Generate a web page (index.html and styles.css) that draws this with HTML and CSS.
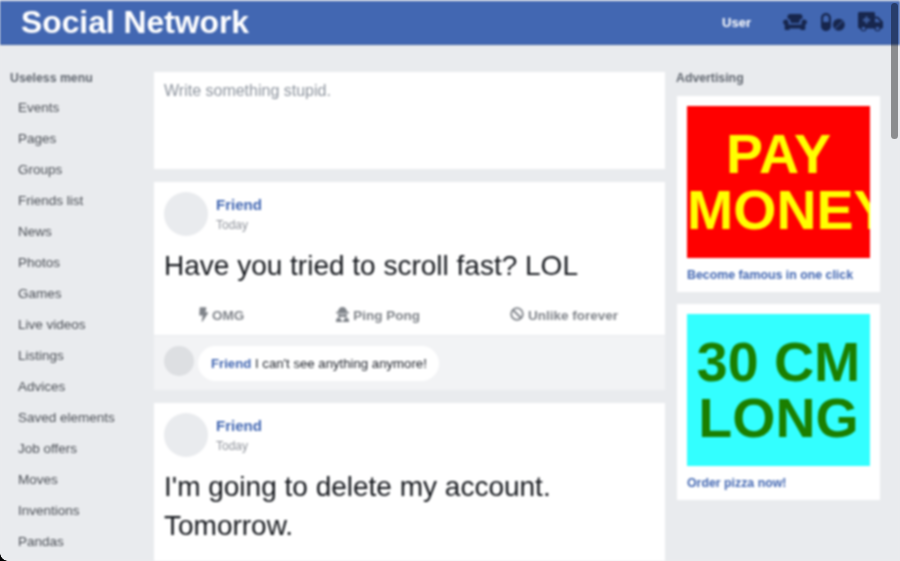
FILE: index.html
```html
<!DOCTYPE html>
<html lang="en">
<head>
    <meta charset="UTF-8">
    <meta name="viewport" content="width=device-width, initial-scale=1.0">
    <title>Social Network</title>
    <link rel="stylesheet" href="styles.css">
</head>
<body>
    <div class="page">
        <header class="topbar">
            <h1 class="logo">Social Network</h1>
            <span class="user">User</span>
            <svg class="top-icon couch" viewBox="0 0 24 16"><path d="M4.500 4.500V2.500C4.500 1.100 5.600 0 7 0h10c1.400 0 2.500 1.100 2.500 2.500v2c-1.700.200-3 1.600-3 3.300V9h-9V7.800c0-1.700-1.300-3.100-3-3.300zM21 5.500c-1.500 0-2.500 1.100-2.500 2.500v2.500h-13V8c0-1.400-1-2.500-2.500-2.500S0 6.600 0 8c0 1.200.700 2.200 1.700 2.700V15c0 .500.500 1 1 1h3c.500 0 1-.500 1-1v-.500h10.600v.500c0 .500.500 1 1 1h3c.500 0 1-.500 1-1v-4.300C23.300 10.200 24 9.200 24 8c0-1.400-1.300-2.500-3-2.500z"/></svg>
            <svg class="top-icon pills" viewBox="0 0 24 18"><path d="M5 0C2.200 0 0 2.200 0 5v8c0 2.800 2.200 5 5 5s5-2.200 5-5V5c0-2.800-2.200-5-5-5zm2.800 9H2.200V5C2.200 3.500 3.500 2.200 5 2.200S7.800 3.500 7.800 5v4z"/><circle cx="17.800" cy="11.800" r="6"/><path class="pill-line" d="M13.800 15.800l8-8"/></svg>
            <svg class="top-icon truck" viewBox="0 0 25 20"><path d="M1.500 0C.700 0 0 .700 0 1.500v13.500C0 15.800.700 16.500 1.500 16.500H2.100a3.500 3.500 0 0 0 6.800 0h7.200a3.500 3.500 0 0 0 6.800 0h.800c.700 0 1.300-.600 1.300-1.300V10.500c0-.500-.200-.900-.500-1.200L20.500 5c-.300-.300-.800-.500-1.200-.500H17V1.500C17 .700 16.300 0 15.500 0zM17 6.500h2l3 3v.800h-5zM5.500 14.700a1.800 1.800 0 1 1 0 3.600 1.800 1.800 0 0 1 0-3.600zm14 0a1.800 1.800 0 1 1 0 3.600 1.800 1.800 0 0 1 0-3.600z"/><path class="cross" d="M7.300 4.500h2.400v2.300H12v2.400H9.700v2.300H7.300V9.200H5V6.800h2.300z"/></svg>
        </header>

        <div class="columns">
            <nav class="side-menu">
                <h2 class="col-title">Useless menu</h2>
                <ul class="menu-list">
                    <li>Events</li>
                    <li>Pages</li>
                    <li>Groups</li>
                    <li>Friends list</li>
                    <li>News</li>
                    <li>Photos</li>
                    <li>Games</li>
                    <li>Live videos</li>
                    <li>Listings</li>
                    <li>Advices</li>
                    <li>Saved elements</li>
                    <li>Job offers</li>
                    <li>Moves</li>
                    <li>Inventions</li>
                    <li>Pandas</li>
                </ul>
            </nav>

            <main class="feed">
                <div class="composer">Write something stupid.</div>

                <article class="post">
                    <div class="post-head">
                        <div class="avatar"></div>
                        <div class="post-meta">
                            <a class="friend-name">Friend</a>
                            <span class="post-date">Today</span>
                        </div>
                    </div>
                    <p class="post-text">Have you tried to scroll fast? LOL</p>
                    <div class="post-actions">
                        <span class="action action-omg">
                            <svg class="action-icon bolt" viewBox="0 0 10 16"><path d="M1.500 0h6c.500 0 .800.400.700.900L7 5.500h2.500c.500 0 .800.600.500 1L4 15.700c-.300.500-1.100.200-1-.400l1.200-6.200H1c-.500 0-.800-.400-.700-.800L.8.600C.900.200 1.200 0 1.500 0z"/></svg>
                            OMG
                        </span>
                        <span class="action action-ping">
                            <svg class="action-icon secret" viewBox="0 0 15 15"><path d="M3 5C3 2 5 0 7.500 0S12 2 12 5z"/><rect x="1" y="4.800" width="13" height="1.700" rx=".8"/><path d="M3 7.300h3.800c.300 0 .500.300.700.600.200-.300.400-.600.700-.600H12v1.200c0 1-.800 1.800-1.800 1.800H9c-.600 0-1.100-.500-1.500-1-.400.500-.900 1-1.500 1H4.800C3.800 10.300 3 9.500 3 8.500z"/><path d="M1 15v-1.500c0-1.400 1-2.500 2.500-3l1.500.500 2.500 4 2.500-4 1.500-.500c1.500.500 2.500 1.600 2.500 3V15z"/></svg>
                            Ping Pong
                        </span>
                        <span class="action action-ban">
                            <svg class="action-icon ban" viewBox="0 0 14 14"><circle cx="7" cy="7" r="5.800"/><path d="M3 3l8 8"/></svg>
                            Unlike forever
                        </span>
                    </div>
                    <div class="comments">
                        <div class="avatar avatar-small"></div>
                        <div class="bubble"><a class="friend-name">Friend</a> I can't see anything anymore!</div>
                    </div>
                </article>

                <article class="post">
                    <div class="post-head">
                        <div class="avatar"></div>
                        <div class="post-meta">
                            <a class="friend-name">Friend</a>
                            <span class="post-date">Today</span>
                        </div>
                    </div>
                    <p class="post-text">I'm going to delete my account. Tomorrow.</p>
                    <div class="post-actions"></div>
                </article>
            </main>

            <aside class="ads">
                <h2 class="col-title">Advertising</h2>
                <div class="ad-card">
                    <div class="ad-banner ad-red">PAY<br>MONEY</div>
                    <a class="ad-link">Become famous in one click</a>
                </div>
                <div class="ad-card">
                    <div class="ad-banner ad-cyan">30 CM<br>LONG</div>
                    <a class="ad-link">Order pizza now!</a>
                </div>
            </aside>
        </div>
    </div>

    <div class="scroll-track"><div class="scroll-thumb"></div></div>
    <div class="window-corner"></div>
</body>
</html>
```

FILE: styles.css
```css
html, body { margin: 0; padding: 0; height: 561px; overflow: hidden; background-color: #e9ebee; }
body { font-family: "Liberation Sans", Arial, sans-serif; color: #4b4f56; }
.page { height: 561px; overflow: hidden; filter: blur(1px); background-color: #e9ebee; }

.topbar { height: 44px; box-sizing: border-box; margin-top: 1px; background-color: #4267b2; display: flex; align-items: center; padding: 0 17px 1px 21px; border-bottom: 1px solid #3d5e9f; }
.logo { margin: 0; font-size: 31.800px; line-height: 42px; font-weight: bold; color: white; flex: 1; }
.user { font-size: 13px; font-weight: bold; color: white; margin-right: 32px; }
.top-icon { fill: #17264d; display: block; flex: none; }
.couch { width: 24px; height: 16px; margin-right: 14px; }
.pills { width: 24px; height: 18px; margin-right: 13px; }
.pill-line { stroke: #4267b2; stroke-width: 1; }
.truck { width: 25px; height: 20px; }
.truck .cross { fill: #3d5e9f; }

.columns { display: flex; align-items: flex-start; }
.side-menu { width: 154px; flex: none; padding-top: 26px; box-sizing: border-box; }
.col-title { margin: 0; font-size: 12.300px; line-height: 14px; font-weight: bold; color: #616770; }
.side-menu .col-title { padding-left: 10px; }
.menu-list { list-style-type: none; margin: 0; padding: 7px 0 0 18px; }
.menu-list li { font-size: 13.500px; line-height: 31px; color: #4b4f56; }

.feed { width: 511px; flex: none; padding-top: 27px; }
.composer { height: 97px; box-sizing: border-box; background-color: white; padding: 10px; font-size: 16px; line-height: 18px; color: #8d949e; margin-bottom: 13px; }
.post { background-color: white; margin-bottom: 13px; }
.post-head { display: flex; gap: 8px; padding: 10px 10px 0; }
.avatar { width: 44px; height: 44px; border-radius: 50%; background-color: #e9ebee; flex: none; }
.post-meta { display: flex; flex-direction: column; padding-top: 4px; }
.friend-name { color: #4267b2; font-weight: bold; }
.post-meta .friend-name { font-size: 15px; line-height: 17px; }
.post-date { font-size: 12px; line-height: 14px; margin-top: 5px; color: #90949c; }
.post-text { margin: 0; padding: 10px; font-size: 28px; line-height: 39px; color: #14171c; }
.post-actions { display: flex; height: 40px; align-items: center; font-size: 13.500px; font-weight: bold; color: #7f8389; }
.action { display: flex; align-items: center; gap: 4px; }
.action-omg { margin-left: 45px; }
.action-ping { margin-left: 91px; }
.action-ban { margin-left: 90px; }
.action-icon { display: block; fill: #7f8389; margin-top: -2px; }
.bolt { width: 9px; height: 15px; }
.secret { width: 15px; height: 15px; margin-right: -1px; }
.ban { width: 14px; height: 14px; fill: none; stroke: #7f8389; stroke-width: 1.800; }
.comments { display: flex; align-items: flex-start; gap: 4px; padding: 10px 10px 9px; background-color: #f2f3f5; border-top: 1px solid #e9ebee; }
.avatar-small { width: 30px; height: 30px; background-color: #dddfe2; }
.bubble { background-color: white; border-radius: 18px; font-size: 13.200px; line-height: 15px; padding: 10px 12px 10px 13px; color: #1d2129; }
.bubble .friend-name { font-weight: bold; }

.ads { width: 203px; flex: none; margin-left: 12px; padding-top: 26px; }
.ads .col-title { margin-left: -1px; }
.ad-card { background-color: white; padding: 10px 10px 10px; margin-top: 11px; margin-bottom: 12px; }
.ad-card + .ad-card { margin-top: 0; }
.ad-banner { width: 183px; height: 152px; overflow: hidden; text-align: center; font-size: 55.500px; line-height: 56px; font-weight: bold; white-space: nowrap; display: flex; flex-direction: column; justify-content: center; }
.ad-red { background-color: #ff0000; color: #ffff00; }
.ad-cyan { background-color: #33ffff; color: #1b7f00; }
.ad-link { display: block; margin-top: 10px; font-size: 12.350px; line-height: 14px; font-weight: bold; color: #4267b2; }

.scroll-track { position: absolute; top: 0; right: 0; width: 10px; height: 561px; }
.scroll-thumb { position: absolute; top: 3px; left: 1px; width: 7px; height: 136px; border-radius: 4px; background-color: rgba(0,0,0,0.4); }
.window-corner { position: absolute; left: 0; bottom: 0; width: 8px; height: 8px; background: radial-gradient(circle at 100% 0, transparent 7.500px, #000 8px); }
```
